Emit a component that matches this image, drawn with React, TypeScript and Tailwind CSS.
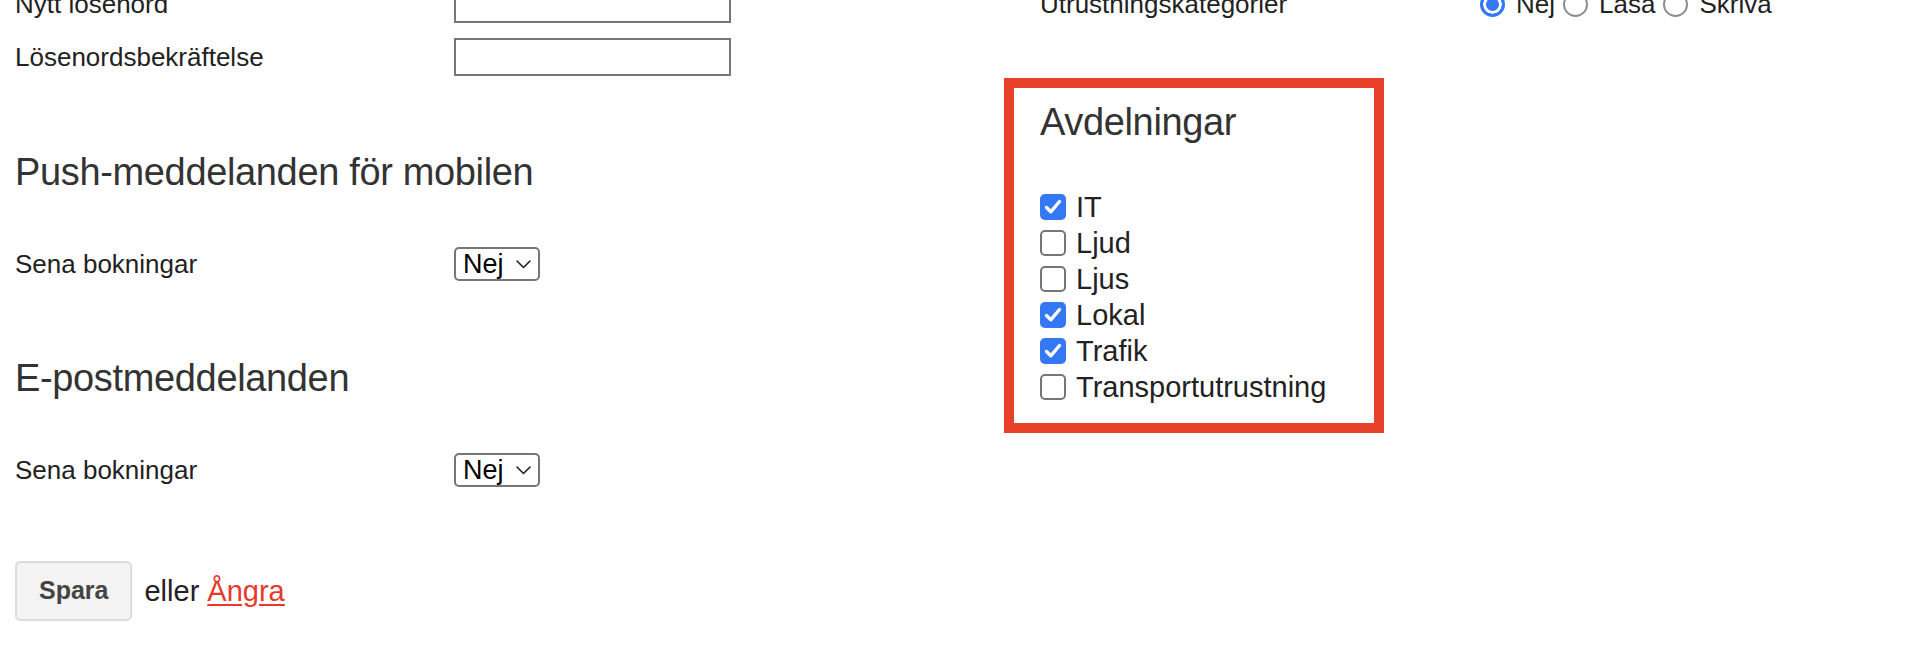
import React, { useState } from 'react';

const font = "font-['Liberation_Sans',Arial,Helvetica,sans-serif]";

const Row: React.FC<{ label: string; className?: string; children: React.ReactNode }> = ({ label, className = '', children }) => (
  <div className={`flex items-center ${className}`}>
    <span className="w-[439px] shrink-0 text-[26px] leading-[30px] text-[#222]">{label}</span>
    {children}
  </div>
);

const NejSelect: React.FC = () => (
  <div className="relative">
    <select
      defaultValue="Nej"
      className="appearance-none w-[86px] h-[34px] border-2 border-[#767676] rounded-[5px] bg-white pl-[7px] pr-[24px] text-[27px] leading-[30px] text-black outline-none"
    >
      <option>Nej</option>
      <option>Ja</option>
    </select>
    <svg className="pointer-events-none absolute right-[9px] top-[13px]" width="15" height="9" viewBox="0 0 15 9" fill="none">
      <path d="M1 1 L7.5 7.5 L14 1" stroke="#222" strokeWidth="1.6" strokeLinecap="round" strokeLinejoin="round" />
    </svg>
  </div>
);

const Radio: React.FC<{ label: string; checked: boolean; onChange: () => void; first?: boolean }> = ({ label, checked, onChange, first }) => (
  <label className={`flex items-center ${first ? '' : 'ml-[8px]'}`}>
    <input
      type="radio"
      name="utrustning"
      checked={checked}
      onChange={onChange}
      className="appearance-none w-[25px] h-[25px] rounded-full border-2 border-[#8e8e8e] bg-white checked:border-[3px] checked:border-[#3478f6] checked:bg-[#3478f6] checked:shadow-[inset_0_0_0_3px_white]"
    />
    <span className="ml-[11px] text-[26px] leading-[30px] text-[#222]">{label}</span>
  </label>
);

const Check: React.FC<{ label: string; checked: boolean; onToggle: () => void }> = ({ label, checked, onToggle }) => (
  <label className="flex items-center h-[36px] cursor-pointer" onClick={onToggle}>
    <span
      className={`w-[26px] h-[26px] shrink-0 rounded-[5px] flex items-center justify-center ${
        checked ? 'bg-[#3478f6]' : 'bg-white border-2 border-[#767676]'
      }`}
    >
      {checked && (
        <svg width="26" height="26" viewBox="0 0 26 26" fill="none">
          <path d="M6.5 13.5 L10.8 17.8 L19.5 7.5" stroke="white" strokeWidth="3.4" strokeLinecap="round" strokeLinejoin="round" />
        </svg>
      )}
    </span>
    <span className="ml-[10px] text-[29px] leading-[36px] text-[#222]">{label}</span>
  </label>
);

export default function App() {
  const [access, setAccess] = useState('Nej');
  const [depts, setDepts] = useState<Record<string, boolean>>({
    IT: true,
    Ljud: false,
    Ljus: false,
    Lokal: true,
    Trafik: true,
    Transportutrustning: false,
  });

  const toggle = (k: string) => setDepts((d) => ({ ...d, [k]: !d[k] }));

  const heading = "text-[38px] leading-[44px] tracking-[-0.35px] text-[#333] font-normal";

  return (
    <div className={`w-full h-[660px] overflow-hidden bg-white ${font}`}>
      <div className="flex -mt-[15px] pl-[15px]">
        {/* Left column: password + notifications */}
        <div className="w-[989px] shrink-0">
          <Row label="Nytt lösenord">
            <input type="password" className="w-[277px] h-[38px] border-2 border-[#767676] bg-white outline-none" />
          </Row>
          <Row label="Lösenordsbekräftelse" className="mt-[15px]">
            <input type="password" className="w-[277px] h-[38px] border-2 border-[#767676] bg-white outline-none" />
          </Row>

          <h2 className={`mt-[74px] ${heading}`}>Push-meddelanden för mobilen</h2>
          <Row label="Sena bokningar" className="mt-[53px]">
            <NejSelect />
          </Row>

          <h2 className={`mt-[75px] ${heading}`}>E-postmeddelanden</h2>
          <Row label="Sena bokningar" className="mt-[53px]">
            <NejSelect />
          </Row>

          <div className="mt-[74px] flex items-center">
            <button className="h-[60px] px-[22px] bg-[#f3f3f3] border-2 border-[#dcdcdc] rounded-[5px] text-[25px] font-bold text-[#444]">
              Spara
            </button>
            <span className="ml-[12px] text-[29px] leading-[34px] text-[#222]">
              eller{' '}
              <a href="#" className="text-[#e8392b] underline underline-offset-[3px]">
                Ångra
              </a>
            </span>
          </div>
        </div>

        {/* Right column: permissions */}
        <div className="flex-1">
          <div className="flex items-center h-[38px] pl-[36px]">
            <span className="w-[440px] shrink-0 text-[26px] leading-[30px] text-[#222]">Utrustningskategorier</span>
            {['Nej', 'Läsa', 'Skriva'].map((opt, i) => (
              <Radio key={opt} label={opt} first={i === 0} checked={access === opt} onChange={() => setAccess(opt)} />
            ))}
          </div>

          <div className="mt-[55px] w-[380px] border-[10px] border-[#e9402a] pt-[12px] pb-[18px] pl-[26px]">
            <h2 className={heading}>Avdelningar</h2>
            <div className="mt-[45px]">
              {Object.keys(depts).map((k) => (
                <Check key={k} label={k} checked={depts[k]} onToggle={() => toggle(k)} />
              ))}
            </div>
          </div>
        </div>
      </div>
    </div>
  );
}
